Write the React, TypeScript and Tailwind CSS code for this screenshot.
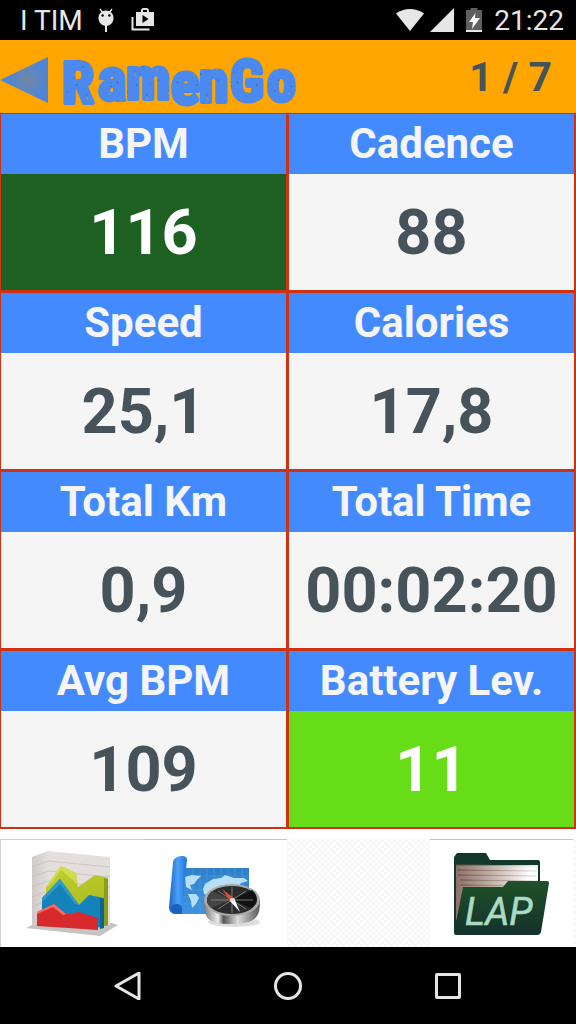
import React from "react";

type Metric = {
  id: string;
  label: string;
  value: string;
  tone?: string;
};

const METRICS: Metric[] = [
  { id: "bpm", label: "BPM", value: "116", tone: "bg-[#1e6021] text-white" },
  { id: "cadence", label: "Cadence", value: "88" },
  { id: "speed", label: "Speed", value: "25,1" },
  { id: "calories", label: "Calories", value: "17,8" },
  { id: "km", label: "Total Km", value: "0,9" },
  { id: "time", label: "Total Time", value: "00:02:20" },
  { id: "avg", label: "Avg BPM", value: "109" },
  {
    id: "battery",
    label: "Battery Lev.",
    value: "11",
    tone: "bg-[#66dd17] text-white",
  },
];

// Worn spots in the logo letters, repeated every 60 units
const SPECKS = Array.from({ length: 70 }, (_, i) => ({
  x: (i * i * 7.3 + i * 11) % 60,
  y: (i * i * 3.1 + i * 17) % 60,
  r: 0.5 + (i % 3) * 0.2,
  worn: i % 4 === 0,
}));

const StatusBar = () => (
  <div className="flex h-10 items-center justify-between bg-black pl-5 pr-3 pt-0.5 text-[28px] leading-9 text-[#e6e6e6]">
    <div className="flex items-center">
      <span>I TIM</span>
      <svg className="mb-0.5 ml-3.5 h-6 w-[18px]" viewBox="0 0 18 24" fill="#e6e6e6">
        <path d="M3 1l3 4M15 1l-3 4" stroke="#e6e6e6" strokeWidth="1.4" />
        <path d="M9 2.500c4.500 0 7.500 3.200 7.500 7.500S13.500 18 9 18 1.500 14.300 1.500 10 4.500 2.500 9 2.500z" />
        <path d="M8 17h2v7H8z" />
        <circle cx="5.600" cy="7.500" r="1.200" fill="#000" />
        <circle cx="12.400" cy="7.500" r="1.200" fill="#000" />
      </svg>
      <svg className="mb-0.5 ml-4 h-6 w-6" viewBox="0 0 24 24">
        <path d="M1.500 9v12.500h17" fill="none" stroke="#e6e6e6" strokeWidth="2" />
        <path
          d="M5 4h5V2.500C10 1 11 0 12.500 0h3C17 0 18 1 18 2.500V4h5v14H5zM12 2v2h4V2zM11.500 7v8l6-4z"
          fill="#e6e6e6"
          fillRule="evenodd"
        />
      </svg>
    </div>
    <div className="flex items-center">
      <svg className="mb-0.5 h-6 w-7" viewBox="0 0 28 24" fill="#e6e6e6">
        <path d="M0 5.500C8-.5 20-.5 28 5.500L14 23z" />
      </svg>
      <svg className="mb-0.5 ml-1.5 h-6 w-6" viewBox="0 0 24 24" fill="#e6e6e6">
        <path d="M24 0v24H0z" />
      </svg>
      <svg className="mb-0.5 ml-3 h-6 w-4" viewBox="0 0 16 24">
        <path d="M0 2h4.500V0h7v2H16v22H0z" fill="#5f5f5f" />
        <path d="M0 22h16v2H0z" fill="#e6e6e6" />
        <path d="M9.500 5L3 14h4l-1 7 8-11H9z" fill="#fff" />
      </svg>
      <span className="ml-3">21:22</span>
    </div>
  </div>
);

const Logo = () => (
  <svg
    className="ml-3 h-[73px] w-[240px] overflow-visible"
    viewBox="0 0 240 73"
    role="img"
    aria-label="RamenGo"
  >
    <defs>
      <pattern id="grunge" width="60" height="60" patternUnits="userSpaceOnUse">
        <rect width="60" height="60" fill="#4a8af0" />
        {SPECKS.map((s, i) => (
          <circle
            key={i}
            cx={s.x}
            cy={s.y}
            r={s.r}
            fill={s.worn ? "#b8963f" : "#3f72a8"}
          />
        ))}
      </pattern>
    </defs>
    <text
      y="61"
      fill="url(#grunge)"
      stroke="url(#grunge)"
      strokeWidth="4"
      strokeLinejoin="round"
      fontSize="60"
      fontWeight="700"
      fontFamily="'Liberation Sans Narrow', 'Roboto Condensed', 'Open Sans Condensed', Roboto, sans-serif"
    >
      <tspan x="2" y="63" fontSize="58">
        R
      </tspan>
      <tspan x="38" y="60">
        a
      </tspan>
      <tspan x="66" y="59">
        m
      </tspan>
      <tspan x="111" y="64">
        e
      </tspan>
      <tspan x="139" y="62">
        n
      </tspan>
      <tspan x="170" y="61" fontSize="58">
        G
      </tspan>
      <tspan x="207" y="61" fontSize="58">
        o
      </tspan>
    </text>
  </svg>
);

const TopBar = () => (
  <header className="flex h-[73px] items-center bg-[#ffa500]">
    <button type="button" aria-label="Back" className="mt-1.5 shrink-0">
      <svg className="h-[46px] w-12" viewBox="0 0 48 46">
        <defs>
          <radialGradient id="arrow" cx="0.58" cy="0.5" r="0.45">
            <stop offset="0" stopColor="#7386a0" />
            <stop offset="1" stopColor="#4a85df" />
          </radialGradient>
        </defs>
        <path d="M0 23L48 0v46z" fill="url(#arrow)" />
      </svg>
    </button>
    <Logo />
    <span className="ml-auto pr-6 pt-px text-[41px] font-bold leading-none text-[#47535b]">
      1 / 7
    </span>
  </header>
);

const MetricCell = ({ metric }: { metric: Metric }) => (
  <section className="border border-b-2 border-r-2 border-[#cf3210]">
    <h2 className="flex h-[60px] items-center justify-center bg-[#448aff] text-[42px] font-bold leading-none text-[#f5f5f5]">
      {metric.label}
    </h2>
    <p
      className={`flex h-[116px] items-center justify-center whitespace-nowrap text-[63px] font-bold leading-none ${
        metric.tone ?? "bg-[#f5f5f5] text-[#47535b]"
      }`}
    >
      {metric.value}
    </p>
  </section>
);

const ChartIcon = () => (
  <svg className="h-[92px] w-24" viewBox="0 0 96 92">
    <defs>
      <linearGradient id="wall" x1="0" x2="1">
        <stop offset="0" stopColor="#cfc9c7" />
        <stop offset="1" stopColor="#e2dedc" />
      </linearGradient>
      <linearGradient id="green" x1="0" x2="0.3" y2="1">
        <stop offset="0" stopColor="#bfd02f" />
        <stop offset="1" stopColor="#a9b91f" />
      </linearGradient>
    </defs>
    <path d="M2 80l10-5 76 0 6 2-18 11z" fill="#c6c4c3" />
    <path d="M8 9l16-6v65L8 79z" fill="url(#wall)" />
    <path d="M24 3l62 6v68l-62-6z" fill="#e4dfdd" />
    <path
      d="M8 19l16-6 62 6M8 29l16-6 62 6M8 39l16-6 62 6M8 49l16-6 62 6M8 59l16-7M8 69l16-7"
      fill="none"
      stroke="#c6c0be"
      strokeWidth="0.8"
    />
    <path d="M22 39l15-21 15 7 2 14 17-12 13 3v48l-62-11z" fill="url(#green)" />
    <path d="M37 18l15 7 2 13-4-5-13-11-13 17-2 0z" fill="#d0dc4e" />
    <path d="M80 30l4 1v46l-4 1z" fill="#8e9d18" />
    <path d="M18 50l18-19 19 26 10-10 15 3v30l-62-9z" fill="#1583bb" />
    <path d="M36 31l19 26-4-1-15-20-18 18v-4z" fill="#2f9acd" />
    <path d="M76 50l4 1v29l-4 1z" fill="#0b6493" />
    <path d="M13 64l17-8 12 10 13-2 19 6v12l-61-4z" fill="#d8292d" />
    <path d="M30 56l12 10-3 1-10-8-16 7v-2z" fill="#f26f6b" />
  </svg>
);

const MapIcon = () => (
  <svg className="h-[76px] w-[92px]" viewBox="0 0 92 76">
    <defs>
      <linearGradient id="roll" x1="0" x2="1">
        <stop offset="0" stopColor="#1767c9" />
        <stop offset="0.5" stopColor="#4da1f7" />
        <stop offset="1" stopColor="#1c74d8" />
      </linearGradient>
      <linearGradient id="sheet" x1="0" y1="0" x2="0" y2="1">
        <stop offset="0" stopColor="#2f80c8" />
        <stop offset="1" stopColor="#3d93df" />
      </linearGradient>
      <linearGradient id="metal" x1="0" x2="1">
        <stop offset="0" stopColor="#777" />
        <stop offset="0.25" stopColor="#eee" />
        <stop offset="0.35" stopColor="#555" />
        <stop offset="0.6" stopColor="#ddd" />
        <stop offset="1" stopColor="#555" />
      </linearGradient>
    </defs>
    <path d="M8 12h72v46H8z" fill="url(#sheet)" />
    <path
      d="M20 20h60M14 27h66M12 34h68M12 41h68M12 48h68M24 12v46M31 12v46M38 12v46M45 12v46M52 12v46M59 12v46M66 12v46M73 12v46"
      stroke="#6bb0ea"
      strokeWidth="0.5"
      opacity="0.6"
    />
    <g fill="#b9def7">
      <path d="M16 21l7-2 9 1-4 4-3 4-4 1 2 5-6-3zM19 38l8 0 3 4-3 6-4 4-1-7zM34 33l2-5 8-5 8-1 4-3 9 3 10 0 4 3-7 2-3 5-10 2-5-2-6 3-7 5-6-2z" />
    </g>
    <path d="M4 7C4 3 8 0 13 0c3 0 5 1 5 4l-5 48c0 4-2 6-6 6-5 0-7-3-7-7z" fill="url(#roll)" />
    <path d="M2 51c4-5 11-3 11 2v5H7c-4 0-6-3-5-7z" fill="#1c62bd" />
    <ellipse cx="65" cy="66" rx="26" ry="5" fill="#dedede" />
    <path d="M35 43c0 18 1 25 28 25s28-10 28-25z" fill="url(#metal)" />
    <ellipse cx="63" cy="44" rx="28" ry="16" fill="#aaa" />
    <ellipse cx="63" cy="44" rx="25" ry="14" fill="#2b2b2b" />
    <path d="M63 44l20-10c7 6 6 13-1 18z" fill="#111" />
    <path d="M63 44L43 35c-6 5-7 12-1 17z" fill="#444" />
    <path
      d="M63 31v26M42 44h42M49 35l28 18M77 35L49 53"
      stroke="#8f8f8f"
      strokeWidth="0.8"
    />
    <path d="M53 33l12 9-4 3z" fill="#e34c32" />
    <path d="M65 42l6 14-10-11z" fill="#fff" />
    <circle cx="63" cy="44" r="2" fill="#ddd" />
  </svg>
);

const LapIcon = () => (
  <svg className="h-[84px] w-24" viewBox="0 0 96 84">
    <defs>
      <linearGradient id="front" x1="0" y1="0" x2="0" y2="1">
        <stop offset="0" stopColor="#1f5227" />
        <stop offset="1" stopColor="#14302c" />
      </linearGradient>
      <linearGradient id="pages" x1="0" x2="1">
        <stop offset="0" stopColor="#8d7067" />
        <stop offset="0.5" stopColor="#cabbb2" />
        <stop offset="0.9" stopColor="#fff" />
      </linearGradient>
      <linearGradient id="edges" x1="0" x2="1">
        <stop offset="0" stopColor="#5e463d" />
        <stop offset="1" stopColor="#e5dcd8" />
      </linearGradient>
    </defs>
    <path
      d="M1 5l3-4h29l4 7h48q2 0 2 2v70q0 2-2 2H3q-2 0-2-2z"
      fill="#12372b"
    />
    <path d="M3 13h82v33L6 68H3z" fill="url(#pages)" />
    <path
      d="M3 13l82 1M4 18l80 1M5 23l79 1M7 28l77 1M8 33l70 1"
      fill="none"
      stroke="url(#edges)"
      strokeWidth="1"
    />
    <path
      d="M10 35h40l5-6h39q2 0 2 2l-8 49q-1 3-4 3H3q-2 0-2-3z"
      fill="url(#front)"
    />
    <text
      x="12"
      y="73"
      fill="#a9dbc4"
      stroke="#a9dbc4"
      strokeWidth="0.6"
      fontSize="38"
      fontStyle="italic"
      fontFamily="Roboto, sans-serif"
    >
      LAP
    </text>
  </svg>
);

const Toolbar = () => (
  <div className="mt-2.5 grid h-[108px] grid-cols-4 bg-[repeating-conic-gradient(#f7f7f7_0_25%,#fdfdfd_0_50%)] bg-[length:6px_6px] pr-[3px]">
    <button
      type="button"
      aria-label="Charts"
      className="flex items-center justify-center border-t border-l border-[#d0d0d0] bg-white"
    >
      <ChartIcon />
    </button>
    <button
      type="button"
      aria-label="Map"
      className="flex items-center justify-center border-t border-[#c4c4c4] bg-white"
    >
      <MapIcon />
    </button>
    <div />
    <button
      type="button"
      aria-label="Lap"
      className="flex items-center justify-center border-t border-[#c4c4c4] bg-white"
    >
      <LapIcon />
    </button>
  </div>
);

const NavBar = () => (
  <nav className="flex h-[77px] items-center justify-center gap-[132px] bg-black">
    <button type="button" aria-label="Back">
      <svg className="size-7" viewBox="0 0 28 28" fill="none">
        <path
          d="M25 1v26L2 14z"
          stroke="#e6e6e6"
          strokeWidth="3"
          strokeLinejoin="round"
        />
      </svg>
    </button>
    <button type="button" aria-label="Home">
      <svg className="size-7" viewBox="0 0 28 28" fill="none">
        <circle cx="14" cy="14" r="12.500" stroke="#e6e6e6" strokeWidth="3" />
      </svg>
    </button>
    <button type="button" aria-label="Recent apps">
      <svg className="size-7" viewBox="0 0 28 28" fill="none">
        <rect
          x="2.500"
          y="2.500"
          width="23"
          height="23"
          rx="0.500"
          stroke="#e6e6e6"
          strokeWidth="3"
        />
      </svg>
    </button>
  </nav>
);

export default function App() {
  return (
    <div className="bg-white font-[Roboto,sans-serif]">
      <StatusBar />
      <TopBar />
      <main className="grid grid-cols-2">
        {METRICS.map((metric) => (
          <MetricCell key={metric.id} metric={metric} />
        ))}
      </main>
      <Toolbar />
      <NavBar />
    </div>
  );
}
